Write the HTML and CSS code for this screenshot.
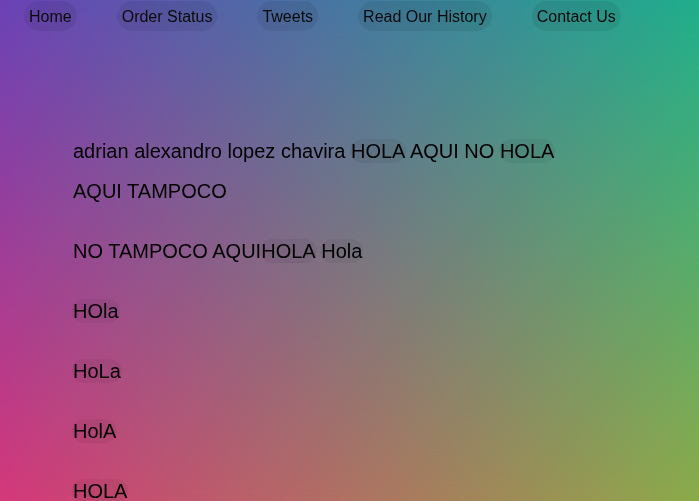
FILE: index.html
```html
<!DOCTYPE html>
<html lang="es">
<head>
<meta charset="utf-8">
<title>Hola</title>
<link rel="stylesheet" href="styles.css">
</head>
<body>
<div class="bg" aria-hidden="true"></div>
<nav class="nav">
  <a class="nav-link" href="#">Home</a>
  <a class="nav-link" href="#">Order Status</a>
  <a class="nav-link" href="#">Tweets</a>
  <a class="nav-link" href="#">Read Our History</a>
  <a class="nav-link" href="#">Contact Us</a>
</nav>
<main class="content">
  <p class="para">adrian alexandro lopez chavira <span class="pill">HOLA</span> AQUI NO <span class="pill">HOLA</span> AQUI TAMPOCO</p>
  <p class="para">NO TAMPOCO AQUI<span class="pill">HOLA</span> <span class="pill">Hola</span></p>
  <p class="para"><span class="pill">HOla</span></p>
  <p class="para"><span class="pill">HoLa</span></p>
  <p class="para"><span class="pill">HolA</span></p>
  <p class="para"><span class="pill">HOLA</span></p>
</main>
</body>
</html>
```
FILE: styles.css
```css
html {
  border-top: 1px solid #c2c2c2;
}
body {
  margin: 0;
  font-family: "Liberation Sans", Arial, sans-serif;
  color: #000;
}
.bg {
  position: fixed;
  inset: 0;
  z-index: -1;
  background: linear-gradient(to right, #d4387a, #8cab4a);
}
.bg::before {
  content: "";
  position: absolute;
  inset: 0;
  background: linear-gradient(to right, #6a42b6, #1fae8c);
  -webkit-mask-image: linear-gradient(to bottom, #000, rgba(0,0,0,0));
  mask-image: linear-gradient(to bottom, #000, rgba(0,0,0,0));
}
.nav {
  display: flex;
  gap: 40px;
  padding-left: 24px;
}
.nav-link {
  display: block;
  padding: 7px 5px 5px 5px;
  border-radius: 15px;
  background: rgba(0, 0, 0, 0.07);
  color: #0a0a0a;
  text-decoration: none;
  font-size: 16px;
  line-height: 18px;
}
.content {
  padding: 80px 0 0 73px;
  width: 520px;
}
.para {
  margin: 20px 0;
  font-size: 20px;
  line-height: 40px;
}
.pill {
  padding: 1px 1px;
  margin: 0 -1px;
  border-radius: 12px;
  background: rgba(0, 0, 0, 0.05);
}
```
